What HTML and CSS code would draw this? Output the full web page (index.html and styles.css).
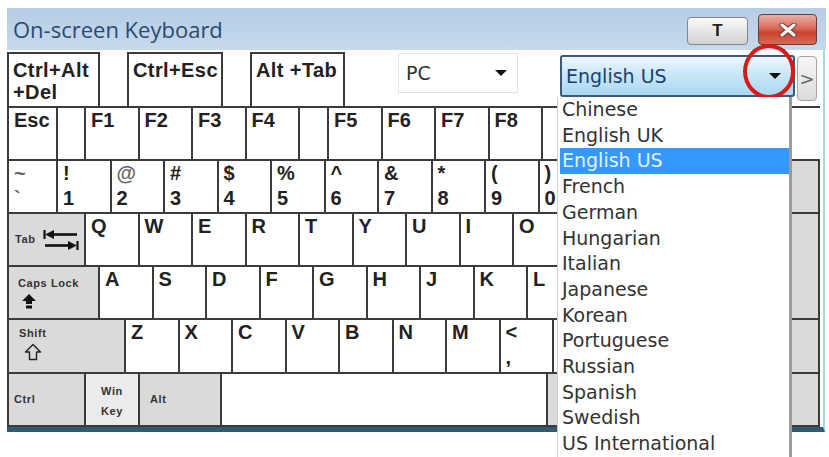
FILE: index.html
```html
<!DOCTYPE html>
<html lang="en">
<head>
    <meta charset="UTF-8">
    <title>On-screen Keyboard</title>
    <link rel="stylesheet" href="styles.css">
</head>
<body>
    <div class="osk">
        <!-- Title bar -->
        <div class="titlebar">
            <span class="title">On-screen Keyboard</span>
            <button class="cap-btn btn-t">T</button>
            <button class="cap-btn btn-close">
                <svg width="18" height="14" viewBox="0 0 18 14">
                    <path d="M3 2 L15 12 M15 2 L3 12" stroke="#6b3a33" stroke-width="5" stroke-linecap="round"/>
                    <path d="M3 2 L15 12 M15 2 L3 12" stroke="#fff" stroke-width="3" stroke-linecap="round"/>
                </svg>
            </button>
        </div>

        <div class="board">
            <!-- Shortcut keys and layout pickers -->
            <div class="toprow">
                <div class="combo cad">Ctrl+Alt<br>+Del</div>
                <div class="combo ce">Ctrl+Esc</div>
                <div class="combo at">Alt +Tab</div>
                <div class="picker pc">PC <span class="caret"></span></div>
                <div class="picker lang">English US <span class="caret"></span><span class="ring"></span></div>
                <button class="more">&gt;</button>
            </div>

            <!-- Function keys (the ones under the open menu stay blank) -->
            <div class="row">
                <div class="key esc">Esc</div>
                <div class="key gap"></div>
                <div class="key">F1</div>
                <div class="key">F2</div>
                <div class="key">F3</div>
                <div class="key">F4</div>
                <div class="key gap2"></div>
                <div class="key">F5</div>
                <div class="key">F6</div>
                <div class="key">F7</div>
                <div class="key">F8</div>
                <div class="key"></div>
                <div class="key"></div>
                <div class="key"></div>
                <div class="key"></div>
                <div class="key fill"></div>
            </div>

            <!-- Number row -->
            <div class="row">
                <div class="key dual esc"><span class="soft">~</span><span class="soft">`</span></div>
                <div class="key dual"><span>!</span><span>1</span></div>
                <div class="key dual"><span class="soft">@</span><span>2</span></div>
                <div class="key dual"><span>#</span><span>3</span></div>
                <div class="key dual"><span>$</span><span>4</span></div>
                <div class="key dual"><span>%</span><span>5</span></div>
                <div class="key dual"><span>^</span><span>6</span></div>
                <div class="key dual"><span>&amp;</span><span>7</span></div>
                <div class="key dual"><span>*</span><span>8</span></div>
                <div class="key dual"><span>(</span><span>9</span></div>
                <div class="key dual"><span>)</span><span>0</span></div>
                <div class="key"></div>
                <div class="key"></div>
                <div class="key mod grow"></div>
            </div>

            <!-- QWERTY row -->
            <div class="row">
                <div class="key mod tab">
                    <span class="small">Tab</span>
                    <svg width="36" height="22" viewBox="0 0 36 22">
                        <path d="M1.5 1 V10" stroke="#111" stroke-width="2.2"/>
                        <path d="M2 5.5 L11 1 V10 Z" fill="#111"/>
                        <path d="M9 5.5 H34" stroke="#111" stroke-width="2.6"/>
                        <path d="M34.5 12 V21" stroke="#111" stroke-width="2.2"/>
                        <path d="M34 16.5 L25 12 V21 Z" fill="#111"/>
                        <path d="M2 16.5 H27" stroke="#111" stroke-width="2.6"/>
                    </svg>
                </div>
                <div class="key">Q</div>
                <div class="key">W</div>
                <div class="key">E</div>
                <div class="key">R</div>
                <div class="key">T</div>
                <div class="key">Y</div>
                <div class="key">U</div>
                <div class="key">I</div>
                <div class="key">O</div>
                <div class="key"></div>
                <div class="key"></div>
                <div class="key"></div>
                <div class="key"></div>
                <div class="key mod grow open"></div>
            </div>

            <!-- Home row -->
            <div class="row">
                <div class="key mod caps">
                    <span class="small">Caps Lock</span>
                    <svg width="14" height="15" viewBox="0 0 14 15">
                        <path d="M7 0 L14 7 H10 V10 H4 V7 H0 Z" fill="#111"/>
                        <rect x="4" y="11.5" width="6" height="3" fill="#111"/>
                    </svg>
                </div>
                <div class="key">A</div>
                <div class="key">S</div>
                <div class="key">D</div>
                <div class="key">F</div>
                <div class="key">G</div>
                <div class="key">H</div>
                <div class="key">J</div>
                <div class="key">K</div>
                <div class="key">L</div>
                <div class="key"></div>
                <div class="key"></div>
                <div class="key mod grow"></div>
            </div>

            <!-- Bottom letter row -->
            <div class="row tall">
                <div class="key mod shift">
                    <span class="small">Shift</span>
                    <svg width="18" height="18" viewBox="0 0 18 18">
                        <path d="M9 1.5 L16.5 9 H12.5 V16.5 H5.5 V9 H1.5 Z" fill="none" stroke="#222" stroke-width="1.4" stroke-linejoin="round"/>
                    </svg>
                </div>
                <div class="key">Z</div>
                <div class="key">X</div>
                <div class="key">C</div>
                <div class="key">V</div>
                <div class="key">B</div>
                <div class="key">N</div>
                <div class="key">M</div>
                <div class="key dual"><span>&lt;</span><span>,</span></div>
                <div class="key"></div>
                <div class="key"></div>
                <div class="key mod grow"></div>
            </div>

            <!-- Space bar row -->
            <div class="row">
                <div class="key mod ctrl"><span class="small">Ctrl</span></div>
                <div class="key mod win"><span class="small">Win</span><span class="small">Key</span></div>
                <div class="key mod alt"><span class="small">Alt</span></div>
                <div class="key space"></div>
                <div class="key mod alt"></div>
                <div class="key mod win"></div>
                <div class="key mod"></div>
                <div class="key mod grow"></div>
            </div>

            <!-- Open language menu -->
            <ul class="lang-list">
                <li>Chinese</li>
                <li>English UK</li>
                <li class="sel">English US</li>
                <li>French</li>
                <li>German</li>
                <li>Hungarian</li>
                <li>Italian</li>
                <li>Japanese</li>
                <li>Korean</li>
                <li>Portuguese</li>
                <li>Russian</li>
                <li>Spanish</li>
                <li>Swedish</li>
                <li>US International</li>
            </ul>
        </div>
    </div>
</body>
</html>
```

FILE: styles.css
```css
html, body {
    margin: 0;
    background: #fff;
}
body {
    min-height: 457px;
    font-family: "Liberation Sans", Arial, sans-serif;
}
.osk {
    width: 819px;
    margin: 8px 0 0 7px;
}
.titlebar {
    height: 42px;
    display: flex;
    align-items: flex-start;
    padding-left: 6px;
    background: linear-gradient(#b6cde6, #c6d9ed);
}
.title {
    font: 22px/42px "Open Sans", sans-serif;
    color: #2b4a6c;
    flex: 1;
}
.cap-btn {
    padding: 0;
    display: flex;
    align-items: center;
    justify-content: center;
    cursor: pointer;
}
.btn-t {
    width: 61px;
    height: 28px;
    margin-top: 9px;
    border: 1px solid #7d8894;
    border-radius: 4px;
    background: linear-gradient(#fbfbfb, #e4e4e4 55%, #d2d2d2);
    font: bold 17px "Liberation Sans", sans-serif;
    color: #222;
}
.btn-close {
    width: 59px;
    height: 31px;
    margin: 6px 9px 0 10px;
    border: 1px solid #6e3a35;
    border-radius: 4px;
    background: linear-gradient(#eab0a4, #dc6c5d 45%, #c9432f 60%, #d86a55);
}
.board {
    position: relative;
    width: 818px;
    box-sizing: border-box;
    border-right: 2px solid #a8d8ef;
    border-bottom: 5px solid #2f5b70;
    background: #fff;
}
.toprow {
    display: flex;
    align-items: flex-start;
    width: 813px;
    height: 58px;
    box-sizing: border-box;
    padding-top: 2px;
    border-bottom: 2px solid #3b3b3b;
}
.combo {
    box-sizing: border-box;
    height: 54px;
    border: 2px solid #3b3b3b;
    border-bottom: none;
    padding: 5px 0 0 4px;
    font: bold 20px/22px "Liberation Sans", sans-serif;
    letter-spacing: 0.4px;
    color: #222;
}
.cad { width: 93px; }
.ce { width: 96px; margin-left: 27px; }
.at { width: 95px; margin-left: 27px; }
.picker {
    position: relative;
    box-sizing: border-box;
    display: flex;
    align-items: center;
    justify-content: space-between;
    font: 19px "DejaVu Sans", sans-serif;
}
.pc {
    width: 120px;
    height: 40px;
    margin: 1px 0 0 53px;
    padding: 0 10px 0 7px;
    border: 1px solid #e4e4e4;
    color: #333;
}
.lang {
    width: 235px;
    height: 42px;
    margin: 3px 0 0 42px;
    padding: 0 12px 0 4px;
    border: 2px solid #3a5a78;
    border-radius: 3px;
    background: linear-gradient(#eef7fd, #cde9f8 40%, #a9d8f2);
    color: #203f6e;
}
.caret {
    width: 0;
    height: 0;
    border-left: 6px solid transparent;
    border-right: 6px solid transparent;
    border-top: 6px solid #111;
}
.ring {
    position: absolute;
    left: 181px;
    top: -13px;
    width: 52px;
    height: 55px;
    box-sizing: border-box;
    border: 4px solid #d61b1b;
    border-radius: 50%;
}
.more {
    width: 20px;
    height: 45px;
    margin: 4px 0 0 2px;
    padding: 0;
    border: 1px solid #a3a3a3;
    border-radius: 4px;
    background: linear-gradient(#f6f6f6, #dcdcdc);
    font: 18px "DejaVu Sans", sans-serif;
    color: #666;
}
.row {
    display: flex;
    width: 813px;
    height: 53px;
}
.row.tall {
    height: 54px;
}
.key {
    box-sizing: border-box;
    width: 53.5px;
    flex-shrink: 0;
    border-right: 2px solid #3b3b3b;
    border-bottom: 2px solid #3b3b3b;
    padding: 2px 0 0 5px;
    font: bold 20px/20px "Liberation Sans", sans-serif;
    color: #222;
    background: #fff;
}
.row > .key:first-child {
    border-left: 2px solid #3b3b3b;
}
.dual {
    display: flex;
    flex-direction: column;
    line-height: 25px;
    padding-top: 0;
}
.soft { color: #666; }
.mod { background: #dadada; }
.grow { flex: 1; }
.open { border-bottom: none; }
.fill { flex: 1; border-right: none; }
.esc { width: 51px; }
.gap { width: 28px; }
.gap2 { width: 29px; }
.space { width: 326px; }
.small {
    font: bold 11px/13px "Liberation Sans", sans-serif;
    letter-spacing: 0.6px;
    color: #333;
}
.tab {
    width: 79px;
    display: flex;
    align-items: center;
    gap: 7px;
    padding: 0 0 0 6px;
}
.tab svg { margin-top: 1px; }
.caps {
    width: 93px;
    display: flex;
    flex-direction: column;
    align-items: flex-start;
    gap: 4px;
    padding: 10px 0 0 9px;
}
.caps svg { margin-left: 4px; }
.shift {
    width: 119px;
    display: flex;
    flex-direction: column;
    align-items: flex-start;
    gap: 3px;
    padding: 7px 0 0 10px;
}
.shift svg { margin-left: 5px; }
.ctrl {
    width: 79px;
    display: flex;
    align-items: center;
    padding: 0 0 0 5px;
}
.win {
    width: 54px;
    display: flex;
    flex-direction: column;
    align-items: center;
    padding: 7px 0 0;
    line-height: 20px;
    background: #ebebeb;
}
.win .small { line-height: 20px; }
.alt {
    width: 82px;
    display: flex;
    align-items: center;
    padding: 0 0 0 10px;
}
.lang-list {
    position: absolute;
    left: 550px;
    top: 47px;
    width: 235px;
    height: 360px;
    box-sizing: border-box;
    margin: 0;
    padding: 0;
    list-style: none;
    background: #fff;
    border-left: 1px solid #cfcfcf;
    border-right: 3px solid #9b9b9b;
    font: 19px/25.7px "DejaVu Sans", sans-serif;
    color: #333;
}
.lang-list li {
    padding-left: 4px;
    white-space: nowrap;
}
.lang-list .sel {
    margin-left: 2px;
    padding-left: 2px;
    background: #3399ff;
    color: #e2f1ff;
}
```
